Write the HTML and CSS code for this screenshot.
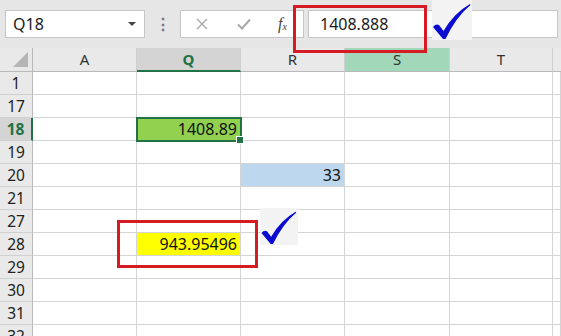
FILE: index.html
```html
<!DOCTYPE html>
<html lang="en">
<head>
  <meta charset="UTF-8">
  <title>Rounding in Excel</title>
  <link rel="stylesheet" href="styles.css">
</head>
<body>
  <header class="toolbar">
    <div class="name-box">
      <span>Q18</span>
      <span class="caret"></span>
    </div>
    <div class="dots">&#8942;</div>
    <div class="fx-box">
      <svg class="fx-btn" width="12" height="12" viewBox="0 0 12 12"><path d="M1 1 L11 11 M11 1 L1 11" stroke="#a8a8a8" stroke-width="1.4"/></svg>
      <svg class="fx-btn" width="14" height="12" viewBox="0 0 14 12"><path d="M1 6.5 L5 10.5 L13 1.5" fill="none" stroke="#a8a8a8" stroke-width="2"/></svg>
      <span class="fx">f<sub>x</sub></span>
    </div>
    <div class="formula-input">1408.888</div>
  </header>

  <main class="sheet">
    <div class="hd corner"><span class="tri"></span></div>
    <div class="hd">A</div>
    <div class="hd col-sel">Q</div>
    <div class="hd">R</div>
    <div class="hd col-hl">S</div>
    <div class="hd">T</div>
    <div class="hd last"></div>

    <div class="rh">1</div><div class="c"></div><div class="c"></div><div class="c"></div><div class="c"></div><div class="c"></div><div class="c"></div>
    <div class="rh">17</div><div class="c"></div><div class="c"></div><div class="c"></div><div class="c"></div><div class="c"></div><div class="c"></div>
    <div class="rh row-sel">18</div><div class="c"></div><div class="c active green">1408.89</div><div class="c"></div><div class="c"></div><div class="c"></div><div class="c"></div>
    <div class="rh">19</div><div class="c"></div><div class="c"></div><div class="c"></div><div class="c"></div><div class="c"></div><div class="c"></div>
    <div class="rh">20</div><div class="c"></div><div class="c"></div><div class="c blue">33</div><div class="c"></div><div class="c"></div><div class="c"></div>
    <div class="rh">21</div><div class="c"></div><div class="c"></div><div class="c"></div><div class="c"></div><div class="c"></div><div class="c"></div>
    <div class="rh">27</div><div class="c"></div><div class="c"></div><div class="c"></div><div class="c"></div><div class="c"></div><div class="c"></div>
    <div class="rh">28</div><div class="c"></div><div class="c yellow">943.95496</div><div class="c"></div><div class="c"></div><div class="c"></div><div class="c"></div>
    <div class="rh">29</div><div class="c"></div><div class="c"></div><div class="c"></div><div class="c"></div><div class="c"></div><div class="c"></div>
    <div class="rh">30</div><div class="c"></div><div class="c"></div><div class="c"></div><div class="c"></div><div class="c"></div><div class="c"></div>
    <div class="rh">31</div><div class="c"></div><div class="c"></div><div class="c"></div><div class="c"></div><div class="c"></div><div class="c"></div>
    <div class="rh">32</div><div class="c"></div><div class="c"></div><div class="c"></div><div class="c"></div><div class="c"></div><div class="c"></div>
  </main>

  <!-- annotations drawn over the screenshot -->
  <div class="mark-box box-formula"></div>
  <div class="mark-box box-cell"></div>
  <svg class="tick tick-top" width="40" height="40" viewBox="0 0 40 40">
    <path d="M1 27 Q4 23.5 7 25 L11.5 31 Q22 13 38 4 L38.5 5 Q24 17 13.5 39 L11 39 Z" fill="#0a0ad0"/>
  </svg>
  <svg class="tick tick-bottom" width="38" height="37" viewBox="0 0 40 40">
    <path d="M1 27 Q4 23.5 7 25 L11.5 31 Q22 13 38 4 L38.5 5 Q24 17 13.5 39 L11 39 Z" fill="#0a0ad0"/>
  </svg>
</body>
</html>
```

FILE: styles.css
```css
* { box-sizing: border-box; }
body {
  margin: 0;
  width: 561px;
  height: 336px;
  overflow: hidden;
  position: relative;
  background: #fff;
  font-family: "Noto Sans", "Open Sans", sans-serif;
  color: #1a1a1a;
}

.toolbar {
  height: 48px;
  background: #e6e6e6;
  display: flex;
  align-items: flex-start;
  padding: 10px 3px 0 5px;
}
.name-box {
  width: 140px;
  height: 28px;
  background: #fff;
  border: 1px solid #c6c6c6;
  display: flex;
  align-items: center;
  justify-content: space-between;
  padding: 0 8px 0 7px;
  font-size: 16px;
}
.caret {
  width: 0;
  height: 0;
  border-left: 4px solid transparent;
  border-right: 4px solid transparent;
  border-top: 4px solid #444;
}
.dots {
  width: 35px;
  height: 28px;
  line-height: 28px;
  text-align: center;
  color: #777;
  font-size: 16px;
  font-weight: bold;
}
.fx-box {
  width: 124px;
  height: 28px;
  background: #fff;
  border: 1px solid #c6c6c6;
  display: flex;
  align-items: center;
  padding-left: 15px;
  gap: 29px;
}
.fx {
  color: #444;
  font-family: "Liberation Serif", serif;
  font-style: italic;
  font-size: 16px;
  margin-left: -2px;
}
.fx sub { font-size: 10px; vertical-align: -1px; }
.formula-input {
  flex: 1;
  height: 28px;
  margin-left: 4px;
  background: #fff;
  border: 1px solid #c6c6c6;
  padding-left: 11px;
  line-height: 26px;
  font-size: 16px;
}

.sheet {
  display: grid;
  grid-template-columns: 33px 104px 104px 104px 105px 103px 1fr;
  grid-template-rows: 24px;
  grid-auto-rows: 23px;
}
.hd {
  background: #e9e9e9;
  border-right: 1px solid #cfcfcf;
  border-bottom: 1px solid #b9b9b9;
  text-align: center;
  font-size: 15px;
  line-height: 23px;
  color: #333;
}
.hd.last { border-right: 0; }
.corner { position: relative; border-right-color: #b9b9b9; }
.tri {
  position: absolute;
  right: 4px;
  bottom: 4px;
  border-left: 15px solid transparent;
  border-bottom: 15px solid #b5b5b5;
}
.col-sel {
  background: #d4d4d4;
  color: #217346;
  font-weight: bold;
  border-bottom: 2px solid #217346;
}
.col-hl { background: #a3d7b9; }

.rh {
  background: #e9e9e9;
  border-right: 1px solid #b9b9b9;
  border-bottom: 1px solid #d0d0d0;
  text-align: center;
  font-size: 15.5px;
  line-height: 22px;
  color: #222;
}
.row-sel {
  background: #d4d4d4;
  color: #217346;
  font-weight: bold;
  border-right: 2px solid #217346;
}
.c {
  border-right: 1px solid #d4d4d4;
  border-bottom: 1px solid #d4d4d4;
  text-align: right;
  padding-right: 3px;
  font-size: 16px;
  line-height: 22px;
  color: #111;
}
.green { background: #92d050; }
.blue { background: #bdd7ee; }
.yellow { background: #ffff00; }
.active {
  position: relative;
  outline: 2px solid #217346;
  outline-offset: -1px;
  z-index: 1;
}
.active::after {
  content: "";
  position: absolute;
  right: -4px;
  bottom: -4px;
  width: 6px;
  height: 6px;
  background: #217346;
  border: 1px solid #fff;
}

.mark-box {
  position: absolute;
  border: 3px solid #d41c24;
  z-index: 2;
}
.box-formula { left: 293px; top: 5px; width: 134px; height: 48px; }
.box-cell { left: 117px; top: 220px; width: 141px; height: 48px; }
.tick {
  position: absolute;
  background: #f3f3f3;
  z-index: 2;
}
.tick-top { left: 432px; top: 0; }
.tick-bottom { left: 260px; top: 208px; }
```
